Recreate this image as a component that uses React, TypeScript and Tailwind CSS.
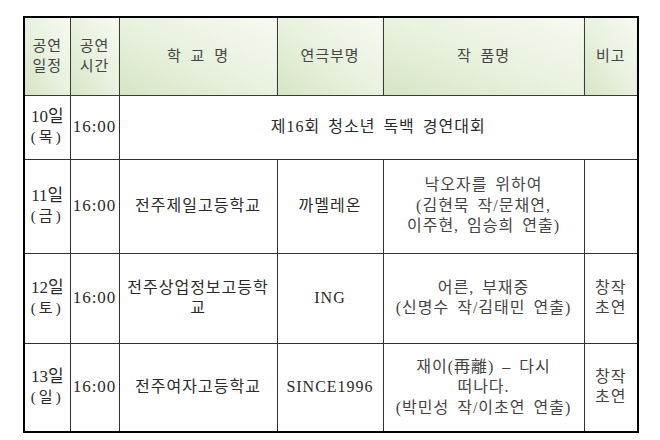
const font = {
  fontFamily: '"Liberation Serif", "Noto Sans CJK KR", serif',
};

const headCell =
  "border border-[#3a3a3a] bg-gradient-to-tr from-[#d6e5c4] via-[#e9f1df] to-[#f6f9f1] text-center align-middle font-normal text-[15px] text-[#444] leading-[20px] tracking-[1px] [word-spacing:4px]";
const cell =
  "border border-[#333] text-center align-middle font-normal text-[#2a2a2a] leading-[20.5px] tracking-[1px] [word-spacing:3px]";

type Row = {
  day: string;
  dow: string;
  school?: React.ReactNode;
  club?: string;
  title?: React.ReactNode;
  note?: React.ReactNode;
  merged?: string;
  h: string;
};

const rows: Row[] = [
  { day: "10일", dow: "(목)", merged: "제16회 청소년 독백 경연대회", h: "h-[64px]" },
  {
    day: "11일",
    dow: "(금)",
    school: "전주제일고등학교",
    club: "까멜레온",
    title: (
      <>
        낙오자를 위하여
        <br />
        (김현묵 작/문채연,
        <br />
        이주현, 임승희 연출)
      </>
    ),
    h: "h-[94px]",
  },
  {
    day: "12일",
    dow: "(토)",
    school: (
      <>
        전주상업정보고등학
        <br />교
      </>
    ),
    club: "ING",
    title: (
      <>
        어른, 부재중
        <br />
        (신명수 작/김태민 연출)
      </>
    ),
    note: (
      <>
        창작
        <br />
        초연
      </>
    ),
    h: "h-[90px]",
  },
  {
    day: "13일",
    dow: "(일)",
    school: "전주여자고등학교",
    club: "SINCE1996",
    title: (
      <>
        재이(再離) – 다시
        <br />
        떠나다.
        <br />
        (박민성 작/이초연 연출)
      </>
    ),
    note: (
      <>
        창작
        <br />
        초연
      </>
    ),
    h: "h-[89px]",
  },
];

export default function App() {
  return (
    <div className="h-[440px] w-[660px] bg-white pl-[23px] pt-[16px]" style={font}>
      <table className="w-[614px] table-fixed border-collapse border-2 border-black text-[16px]">
        <colgroup>
          <col className="w-[46px]" />
          <col className="w-[49px]" />
          <col className="w-[158px]" />
          <col className="w-[106px]" />
          <col className="w-[201px]" />
          <col className="w-[54px]" />
        </colgroup>
        <thead>
          <tr className="h-[78px]">
            <th className={headCell}>
              공연
              <br />
              일정
            </th>
            <th className={headCell}>
              공연
              <br />
              시간
            </th>
            <th className={headCell}>학 교 명</th>
            <th className={headCell}>연극부명</th>
            <th className={headCell}>작 품명</th>
            <th className={headCell}>비고</th>
          </tr>
        </thead>
        <tbody>
          {rows.map((r) => (
            <tr key={r.day} className={r.h}>
              <td className={`${cell} tracking-normal [word-spacing:0px]`}>
                <span className="text-[17px]">{r.day}</span>
                <br />
                <span className="tracking-[3px] text-[15px]">{r.dow}</span>
              </td>
              <td className={`${cell} text-[17px] tracking-[0.5px]`}>16:00</td>
              {r.merged ? (
                <td colSpan={4} className={cell}>
                  {r.merged}
                </td>
              ) : (
                <>
                  <td className={cell}>{r.school}</td>
                  <td className={cell}>{r.club}</td>
                  <td className={`${cell} text-[#444]`}>{r.title}</td>
                  <td className={`${cell} text-[#444]`}>{r.note}</td>
                </>
              )}
            </tr>
          ))}
        </tbody>
      </table>
    </div>
  );
}
